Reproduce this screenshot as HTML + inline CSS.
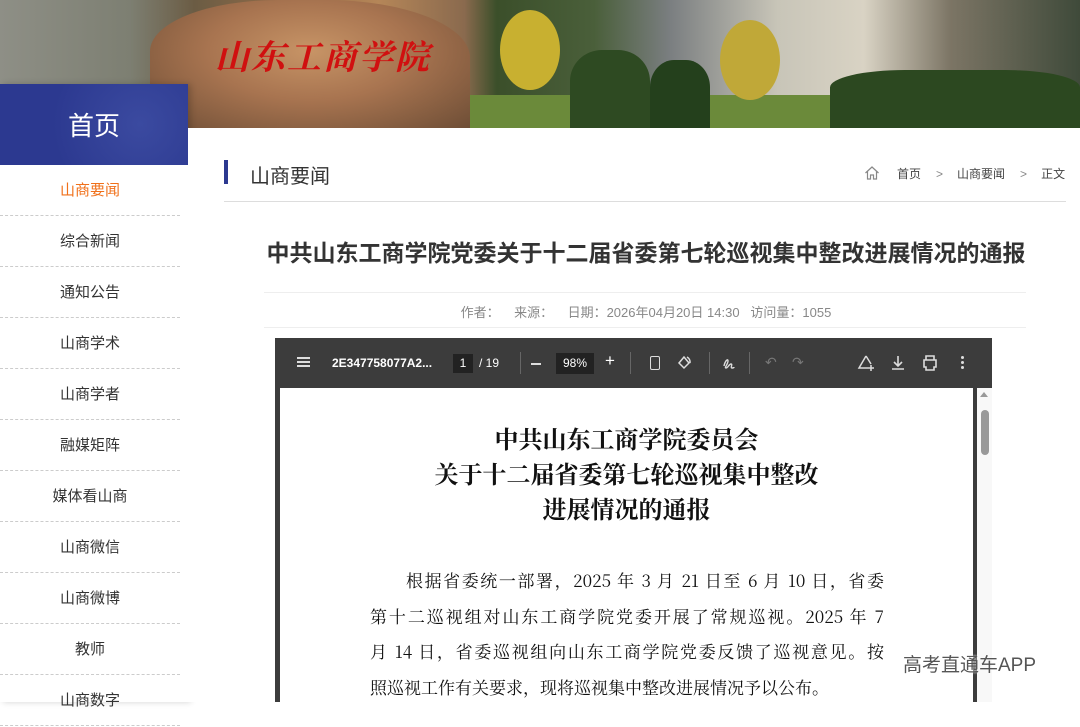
<!DOCTYPE html>
<html><head><meta charset="utf-8"><style>
*{margin:0;padding:0;box-sizing:border-box}
body{width:1080px;height:702px;overflow:hidden;position:relative;background:#fff;font-family:"Liberation Sans","Noto Sans CJK SC",sans-serif}
.banner{position:absolute;left:0;top:0;width:1080px;height:128px;overflow:hidden;background:linear-gradient(90deg,#8e8f86 0%,#7d7f72 12%,#6b5c44 18%,#9a6e48 28%,#b58658 35%,#8a6a4e 43%,#3b4f2a 46%,#4a5f3a 55%,#7a7e80 62%,#c8c5b8 72%,#d9d3c4 80%,#7c7565 88%,#3f4a3a 100%)}
.abs{position:absolute}
.side{position:absolute;left:0;top:84px;width:188px;height:618px;background:#fff;box-shadow:3px 0 6px rgba(0,0,0,.18)}
.side .hd{height:81px;background:radial-gradient(circle at 140px 40px,#3b4aa0 0,#2c3990 60%);color:#fff;font-size:26px;text-align:center;line-height:84px}
.side .it{height:51px;line-height:52px;text-align:center;font-size:15px;color:#333;border-bottom:1px dashed #ccc;width:180px}
.main{position:absolute;left:188px;top:128px;width:892px;height:574px;background:#fff}
.pl{height:35.6px;text-align:justify;text-align-last:justify;white-space:nowrap}
</style></head><body>
<div class="banner">
 <div class="abs" style="left:150px;top:0;width:320px;height:128px;border-radius:40% 45% 0 0;background:radial-gradient(ellipse at 50% 40%,#c79466 0,#a87450 45%,#6e4e36 100%)"></div>
 <div class="abs" style="left:215px;top:30px;font-size:34px;color:#d01010;font-family:'Noto Serif CJK SC',serif;font-weight:bold;font-style:italic;letter-spacing:2px">山东工商学院</div>
 <div class="abs" style="left:470px;top:95px;width:610px;height:33px;background:#6b8a3a"></div>
 <div class="abs" style="left:500px;top:10px;width:60px;height:80px;border-radius:50%;background:#c8b030"></div>
 <div class="abs" style="left:720px;top:20px;width:60px;height:80px;border-radius:50%;background:#c0a838"></div>
 <div class="abs" style="left:570px;top:50px;width:80px;height:78px;background:#2e4a22;border-radius:40% 40% 0 0"></div>
 <div class="abs" style="left:650px;top:60px;width:60px;height:68px;background:#24401c;border-radius:40% 40% 0 0"></div>
 <div class="abs" style="left:830px;top:70px;width:250px;height:58px;background:#2c4820;border-radius:30% 30% 0 0"></div>
</div>
<div class="side">
 <div class="hd">首页</div>
 <div class="it" style="color:#f0701a">山商要闻</div>
 <div class="it">综合新闻</div>
 <div class="it">通知公告</div>
 <div class="it">山商学术</div>
 <div class="it">山商学者</div>
 <div class="it">融媒矩阵</div>
 <div class="it">媒体看山商</div>
 <div class="it">山商微信</div>
 <div class="it">山商微博</div>
 <div class="it">教师</div>
 <div class="it">山商数字</div>
</div>
<div class="main">
 <div class="abs" style="left:36px;top:32px;width:4px;height:24px;background:#2c3990"></div>
 <div class="abs" style="left:62px;top:32px;font-size:20px;color:#333">山商要闻</div>
 <svg class="abs" style="left:676px;top:37px" width="16" height="16" viewBox="0 0 16 16"><path d="M1.5 8 8 2l6.5 6M3.5 6.5V14h3v-4h3v4h3V6.5" fill="none" stroke="#888" stroke-width="1.2"/></svg>
 <div class="abs" style="left:709px;top:37px;font-size:12px;color:#444;white-space:nowrap">首页<span style="color:#888;margin:0 14px 0 15px">&gt;</span>山商要闻<span style="color:#888;margin:0 14px 0 15px">&gt;</span>正文</div>
 <div class="abs" style="left:36px;top:73px;width:842px;height:1px;background:#ddd"></div>
 <div class="abs" style="left:0;width:892px;top:106px;text-align:center;font-size:23px;font-weight:bold;color:#333;padding-left:24px;white-space:nowrap">中共山东工商学院党委关于十二届省委第七轮巡视集中整改进展情况的通报</div>
 <div class="abs" style="left:76px;top:164px;width:762px;height:1px;background:#eee"></div>
 <div class="abs" style="left:0;width:892px;top:174px;text-align:center;font-size:13px;color:#888;padding-left:24px;white-space:nowrap">作者：&nbsp;&nbsp;&nbsp;&nbsp;来源：&nbsp;&nbsp;&nbsp;&nbsp;日期：2026年04月20日 14:30&nbsp;&nbsp;&nbsp;访问量：1055</div>
 <div class="abs" style="left:76px;top:199px;width:762px;height:1px;background:#eee"></div>
</div>
<!-- pdf viewer -->
<div class="abs" style="left:275px;top:338px;width:717px;height:364px;background:#3c3c3c"></div>
<div class="abs" style="left:280px;top:388px;width:693px;height:314px;background:#fff"></div>
<div class="abs" style="left:977px;top:388px;width:15px;height:314px;background:#f8f8f8"></div>
<div class="abs" style="left:980px;top:392px;width:0;height:0;border-left:4px solid transparent;border-right:4px solid transparent;border-bottom:5px solid #999"></div>
<div class="abs" style="left:981px;top:410px;width:8px;height:45px;border-radius:4px;background:#999"></div>
<div class="abs" style="left:275px;top:338px;width:717px;height:50px;color:#fff;font-size:12px">
 <div class="abs" style="left:22px;top:19px;width:13px;height:2px;background:#ddd;box-shadow:0 4px 0 #ddd,0 8px 0 #ddd"></div>
 <div class="abs" style="left:57px;top:18px;font-weight:bold">2E347758077A2...</div>
 <div class="abs" style="left:178px;top:16px;width:20px;height:19px;background:#222;text-align:center;line-height:19px">1</div>
 <div class="abs" style="left:204px;top:18px">/ 19</div>
 <div class="abs" style="left:245px;top:14px;width:1px;height:22px;background:#666"></div>
 <div class="abs" style="left:256px;top:25px;width:10px;height:1.5px;background:#ddd"></div>
 <div class="abs" style="left:281px;top:15px;width:38px;height:21px;background:#222;text-align:center;line-height:21px">98%</div>
 <div class="abs" style="left:330px;top:13px;font-size:17px">+</div>
 <div class="abs" style="left:355px;top:14px;width:1px;height:22px;background:#666"></div>
 <div class="abs" style="left:375px;top:18px;width:10px;height:14px;border:1.5px solid #ddd;border-radius:2px"></div>
 <svg class="abs" style="left:400px;top:16px" width="18" height="18" viewBox="0 0 18 18"><path d="M9 3 4 9l5 5 5-5z M12 3a6 6 0 0 1 3 6" fill="none" stroke="#ddd" stroke-width="1.5"/></svg>
 <div class="abs" style="left:434px;top:14px;width:1px;height:22px;background:#666"></div>
 <svg class="abs" style="left:446px;top:17px" width="16" height="16" viewBox="0 0 16 16"><path d="M3 11c1-5 4-8 4-5s-4 7-2 7 3-4 5-4-1 4 1 4 2-1 2-1" fill="none" stroke="#ddd" stroke-width="1.4"/></svg>
 <div class="abs" style="left:474px;top:14px;width:1px;height:22px;background:#666"></div>
 <div class="abs" style="left:490px;top:16px;color:#777;font-size:14px">↶</div>
 <div class="abs" style="left:517px;top:16px;color:#777;font-size:14px">↷</div>
 <svg class="abs" style="left:582px;top:16px" width="18" height="18" viewBox="0 0 18 18"><path d="M9 2 2 14h9M9 2l5 8M14 11v6M11 14h6" fill="none" stroke="#ddd" stroke-width="1.5"/></svg>
 <svg class="abs" style="left:615px;top:16px" width="16" height="18" viewBox="0 0 16 18"><path d="M8 2v10M4 8l4 4 4-4M2 15h12" fill="none" stroke="#ddd" stroke-width="1.6"/></svg>
 <svg class="abs" style="left:646px;top:16px" width="18" height="18" viewBox="0 0 18 18"><path d="M5 6V2h8v4M3 6h12v7h-2v3H5v-3H3z" fill="none" stroke="#ddd" stroke-width="1.6"/></svg>
 <div class="abs" style="left:686px;top:18px;width:3px;height:3px;background:#ddd;border-radius:50%;box-shadow:0 5px 0 #ddd,0 10px 0 #ddd"></div>
</div>
<div class="abs" style="left:280px;top:420px;width:693px;text-align:center;font-family:'Noto Serif CJK SC',serif;font-weight:bold;font-size:24px;line-height:35px;color:#111">中共山东工商学院委员会<br>关于十二届省委第七轮巡视集中整改<br>进展情况的通报</div>
<div class="abs" style="left:370px;top:562px;width:514px;font-family:'Noto Serif CJK SC',serif;font-size:17px;line-height:35.6px;color:#111">
 <div class="pl" style="padding-left:36px">根据省委统一部署，2025 年 3 月 21 日至 6 月 10 日，省委</div>
 <div class="pl">第十二巡视组对山东工商学院党委开展了常规巡视。2025 年 7</div>
 <div class="pl">月 14 日，省委巡视组向山东工商学院党委反馈了巡视意见。按</div>
 <div style="white-space:nowrap">照巡视工作有关要求，现将巡视集中整改进展情况予以公布。</div>
</div>
<div class="abs" style="left:903px;top:650px;font-size:19px;color:#555;text-shadow:0 0 2px #fff">高考直通车APP</div>
</body></html>
